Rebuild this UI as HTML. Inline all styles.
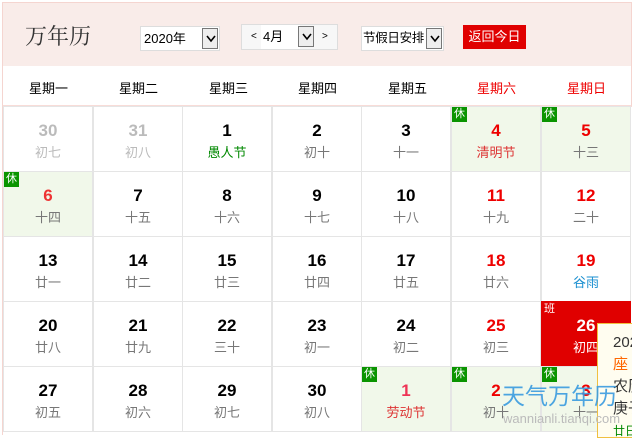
<!DOCTYPE html>
<html><head><meta charset="utf-8"><style>
*{margin:0;padding:0;box-sizing:border-box}
body{width:632px;height:435px;overflow:hidden;background:#fff;font-family:"Liberation Sans","Noto Sans CJK SC",sans-serif;position:relative}
.hd{position:absolute;left:2px;top:2px;width:630px;height:64px;background:#f9ece9;border:1px solid #f5d5d0;border-bottom:none}
.title{position:absolute;left:25px;top:20px;font-size:22px;color:#333;font-family:"Noto Serif CJK SC",serif}
.sel{position:absolute;height:25px;background:#fff;border:1px solid #ddd;font-size:13px;line-height:23px;color:#000;white-space:nowrap;overflow:hidden}
.arr{position:absolute;right:1px;top:1px;width:16px;height:21px;border:1px solid #777;background:#eee}
.arr svg{position:absolute;left:3px;top:6px}
.btn{position:absolute;left:463px;top:25px;width:63px;height:24px;background:#e00000;color:#fff;font-size:13px;line-height:24px;text-align:center}
.wk{position:absolute;top:66px;left:2px;width:630px;height:41px;border:1px solid #f5d5d0;border-top:none;border-bottom:2px solid #f8dcd8}
.wk span{position:absolute;top:12px;font-size:13px;width:89px;text-align:center}
.c{position:absolute;width:90px;height:66px;border:1px solid #e5e5e5;text-align:center;background:#fff}
.c b{display:block;margin-top:14px;font-size:17px;line-height:20px;color:#000;font-family:"Liberation Sans",sans-serif}
.c i{display:block;font-style:normal;font-size:13px;line-height:18px;margin-top:3px;color:#777}
.g{background:#f1f8ea}
.r b{color:#e00}
.x{position:absolute;left:0;top:0;width:15px;height:15px;background:#0a9400;color:#fff;font-size:11px;line-height:15px;text-align:center}
.gray b{color:#bbb}.gray i{color:#bbb}
</style></head><body>
<div class="hd"></div>
<div class="title">万年历</div>
<div class="sel" style="left:140px;top:26px;width:80px;padding-left:3px">2020年<div class="arr"><svg width="10" height="8"><path d="M1 1L5 6L9 1" stroke="#000" stroke-width="1.6" fill="none"/></svg></div></div>
<div class="sel" style="left:241px;top:24px;width:97px;height:26px;background:#f7f7f7"><span style="position:absolute;left:9px;font-size:10px">&lt;</span><span style="position:absolute;left:19px;top:0;width:39px;height:24px;background:#fff;padding-left:2px">4月</span><div class="arr" style="right:23px"><svg width="10" height="8"><path d="M1 1L5 6L9 1" stroke="#000" stroke-width="1.6" fill="none"/></svg></div><span style="position:absolute;left:80px;font-size:10px">&gt;</span></div>
<div class="sel" style="left:361px;top:26px;width:83px;padding-left:1px;font-size:12.5px;letter-spacing:-0.3px">节假日安排<div class="arr"><svg width="10" height="8"><path d="M1 1L5 6L9 1" stroke="#000" stroke-width="1.6" fill="none"/></svg></div></div>
<div class="btn">返回今日</div>
<div class="wk">
<span style="left:1px">星期一</span><span style="left:91px">星期二</span><span style="left:181px">星期三</span><span style="left:270px">星期四</span><span style="left:360px">星期五</span><span style="left:449px;color:#e00">星期六</span><span style="left:539px;color:#e00">星期日</span></div>
<div style="position:absolute;left:2px;top:106px;width:1px;height:329px;background:#f5d5d0"></div>

<div class="c gray" style="left:3px;top:106px"><b>30</b><i>初七</i></div>
<div class="c gray" style="left:93px;top:106px"><b>31</b><i>初八</i></div>
<div class="c" style="left:182px;top:106px"><b>1</b><i style="color:#080">愚人节</i></div>
<div class="c" style="left:272px;top:106px"><b>2</b><i>初十</i></div>
<div class="c" style="left:361px;top:106px"><b>3</b><i>十一</i></div>
<div class="c g r" style="left:451px;top:106px"><div class="x">休</div><b>4</b><i style="color:#d33">清明节</i></div>
<div class="c g r" style="left:541px;top:106px"><div class="x">休</div><b>5</b><i>十三</i></div>

<div class="c g r" style="left:3px;top:171px"><div class="x">休</div><b style="color:#e33">6</b><i>十四</i></div>
<div class="c" style="left:93px;top:171px"><b>7</b><i>十五</i></div>
<div class="c" style="left:182px;top:171px"><b>8</b><i>十六</i></div>
<div class="c" style="left:272px;top:171px"><b>9</b><i>十七</i></div>
<div class="c" style="left:361px;top:171px"><b>10</b><i>十八</i></div>
<div class="c r" style="left:451px;top:171px"><b>11</b><i>十九</i></div>
<div class="c r" style="left:541px;top:171px"><b>12</b><i>二十</i></div>

<div class="c" style="left:3px;top:236px"><b>13</b><i>廿一</i></div>
<div class="c" style="left:93px;top:236px"><b>14</b><i>廿二</i></div>
<div class="c" style="left:182px;top:236px"><b>15</b><i>廿三</i></div>
<div class="c" style="left:272px;top:236px"><b>16</b><i>廿四</i></div>
<div class="c" style="left:361px;top:236px"><b>17</b><i>廿五</i></div>
<div class="c r" style="left:451px;top:236px"><b>18</b><i>廿六</i></div>
<div class="c r" style="left:541px;top:236px"><b>19</b><i style="color:#1a8fd0">谷雨</i></div>

<div class="c" style="left:3px;top:301px"><b>20</b><i>廿八</i></div>
<div class="c" style="left:93px;top:301px"><b>21</b><i>廿九</i></div>
<div class="c" style="left:182px;top:301px"><b>22</b><i>三十</i></div>
<div class="c" style="left:272px;top:301px"><b>23</b><i>初一</i></div>
<div class="c" style="left:361px;top:301px"><b>24</b><i>初二</i></div>
<div class="c r" style="left:451px;top:301px"><b>25</b><i>初三</i></div>
<div class="c" style="left:541px;top:301px;background:#e00000;border-color:#e00000"><div class="x" style="background:none">班</div><b style="color:#fff">26</b><i style="color:#fff">初四</i></div>

<div class="c" style="left:3px;top:366px"><b>27</b><i>初五</i></div>
<div class="c" style="left:93px;top:366px"><b>28</b><i>初六</i></div>
<div class="c" style="left:182px;top:366px"><b>29</b><i>初七</i></div>
<div class="c" style="left:272px;top:366px"><b>30</b><i>初八</i></div>
<div class="c g r" style="left:361px;top:366px"><div class="x">休</div><b style="color:#e35">1</b><i style="color:#d33">劳动节</i></div>
<div class="c g r" style="left:451px;top:366px"><div class="x">休</div><b>2</b><i>初十</i></div>
<div class="c g r" style="left:541px;top:366px"><div class="x">休</div><b>3</b><i>十一</i></div>

<div style="position:absolute;left:597px;top:323px;width:40px;height:115px;background:#fffdf0;border:1px solid #f0c040;border-right:none;overflow:hidden;font-size:15px;line-height:22px;color:#333;padding:8px 0 0 15px;white-space:nowrap">2020<br><span style="color:#f60">座</span><br>农历<br>庚子<br><span style="font-size:12px;color:#080">廿日</span></div>
<div style="position:absolute;left:502px;top:382px;font-size:23px;line-height:28px;color:#3a9be0;white-space:nowrap;opacity:.9">天气万年历</div>
<div style="position:absolute;left:503px;top:411px;font-size:13px;color:#bbb;white-space:nowrap">wannianli.tianqi.com</div>
</body></html>
